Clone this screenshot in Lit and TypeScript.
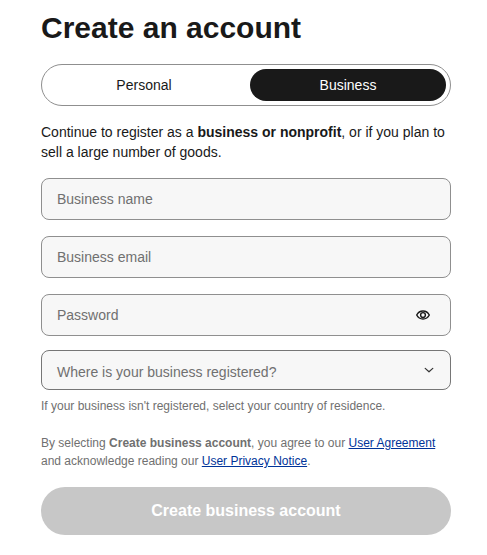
import { LitElement, html, css } from "lit";
import { customElement, state } from "lit/decorators.js";

@customElement("app-root")
export class AppRoot extends LitElement {
  @state() private mode = "business";

  static styles = css`
    :host {
      display: block;
      width: 487px;
      height: 555px;
      overflow: hidden;
      background: #fff;
      font-family: "Liberation Sans", Arial, sans-serif;
      color: #191919;
    }
    .page {
      display: flex;
      flex-direction: column;
      box-sizing: border-box;
      width: 410px;
      margin-left: 41px;
    }
    h1 {
      margin: 10px 0 0;
      font-size: 30px;
      line-height: 36px;
      font-weight: 700;
    }
    .toggle {
      display: grid;
      grid-template-columns: 1fr 1fr;
      gap: 8px;
      box-sizing: border-box;
      height: 42px;
      margin-top: 18px;
      padding: 4px;
      border: 1px solid #8f8f8f;
      border-radius: 21px;
    }
    .toggle button {
      border: 0;
      background: none;
      border-radius: 16px;
      padding: 0;
      font: 14px/32px "Liberation Sans", Arial, sans-serif;
      color: #191919;
    }
    .toggle button.on {
      background: #191919;
      color: #fff;
    }
    .intro {
      margin: 16px 0 0;
      font-size: 14px;
      line-height: 20px;
    }
    .field {
      display: flex;
      align-items: center;
      box-sizing: border-box;
      height: 42px;
      padding: 0 15px;
      border: 1px solid #8f8f8f;
      border-radius: 8px;
      background: #f7f7f7;
    }
    .field.first { margin-top: 16px; }
    .field.next { margin-top: 16px; }
    .field.pw { padding-right: 19px; }
    .field.select { height: 40px; margin-top: 14px; border-color: #767676; }
    .field input {
      flex: 1;
      min-width: 0;
      border: 0;
      outline: 0;
      padding: 0;
      background: none;
      font: 14px "Liberation Sans", Arial, sans-serif;
      color: #191919;
    }
    .field input::placeholder { color: #707070; opacity: 1; }
    .field .label { flex: 1; font-size: 14px; line-height: 16px; padding-top: 4px; color: #707070; }
    .field svg { display: block; flex: none; }
    .note {
      margin: 8px 0 0;
      font-size: 12px;
      line-height: 16px;
      color: #707070;
    }
    .legal {
      margin: 20px 0 0;
      font-size: 12px;
      line-height: 18px;
      color: #707070;
    }
    .legal a { color: #003399; }
    .submit {
      height: 48px;
      margin-top: 17px;
      border: 0;
      border-radius: 24px;
      background: #c7c7c7;
      color: #fff;
      font: 700 16px "Liberation Sans", Arial, sans-serif;
    }
  `;

  render() {
    return html`
      <div class="page">
        <h1>Create an account</h1>
        <div class="toggle">
          <button class=${this.mode === "personal" ? "on" : ""} @click=${() => (this.mode = "personal")}>Personal</button>
          <button class=${this.mode === "business" ? "on" : ""} @click=${() => (this.mode = "business")}>Business</button>
        </div>
        <p class="intro">Continue to register as a <b>business or nonprofit</b>, or if you plan to sell a large number of goods.</p>
        <label class="field first"><input placeholder="Business name" /></label>
        <label class="field next"><input placeholder="Business email" /></label>
        <label class="field next pw">
          <input type="password" placeholder="Password" />
          <svg width="16" height="16" viewBox="0 0 16 16" fill="none" stroke="#191919" stroke-width="1.4">
            <path d="M1.700 8c1.400-2.700 3.500-4 6.300-4s4.900 1.300 6.300 4c-1.400 2.700-3.500 4-6.300 4S3.100 10.700 1.700 8z" />
            <circle cx="8" cy="8" r="2.400" />
          </svg>
        </label>
        <div class="field select">
          <span class="label">Where is your business registered?</span>
          <svg width="12" height="12" viewBox="0 0 12 12" fill="none" stroke="#333" stroke-width="1.200" stroke-linecap="round" stroke-linejoin="round">
            <path d="M2.200 4.400l3.800 3.400 3.800-3.400" />
          </svg>
        </div>
        <p class="note">If your business isn't registered, select your country of residence.</p>
        <p class="legal">By selecting <b>Create business account</b>, you agree to our <a href="#">User Agreement</a> and acknowledge reading our <a href="#">User Privacy Notice</a>.</p>
        <button class="submit" disabled>Create business account</button>
      </div>
    `;
  }
}
